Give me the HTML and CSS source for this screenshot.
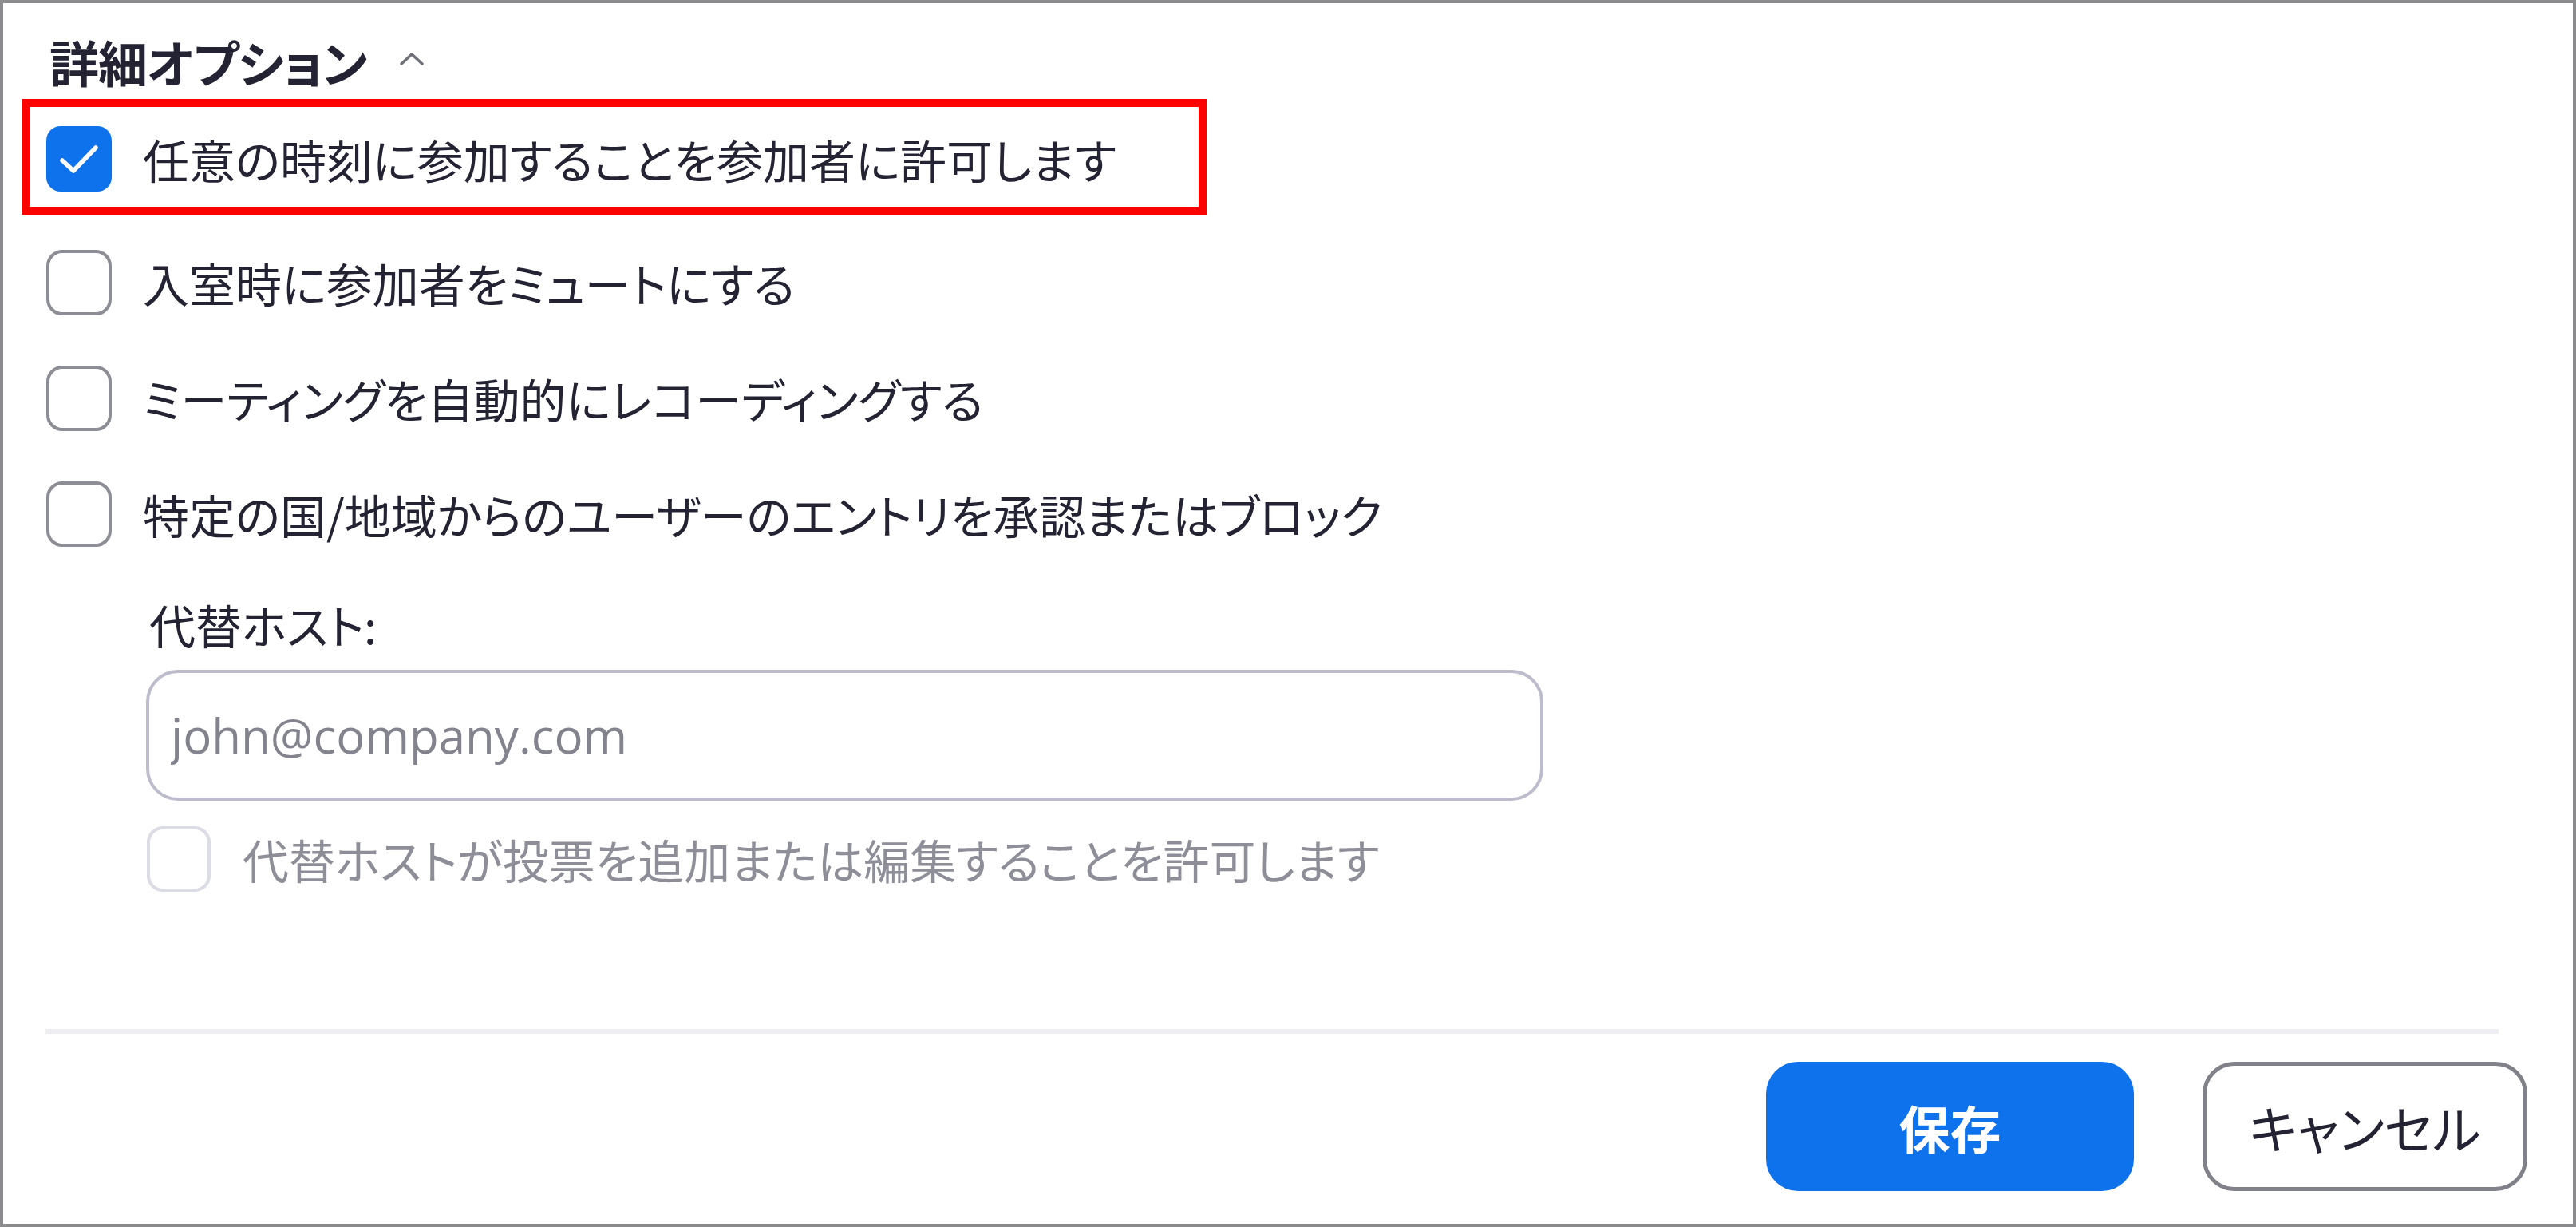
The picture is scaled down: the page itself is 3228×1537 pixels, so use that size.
FILE: index.html
```html
<!DOCTYPE html>
<html lang="ja">
<head>
<meta charset="utf-8">
<title>詳細オプション</title>
<link rel="stylesheet" href="styles.css">
</head>
<body>
<div class="dialog">
  <div class="section-head">
    <span class="title">詳細オプション</span>
    <svg class="caret" viewBox="0 0 32 18" aria-hidden="true"><path d="M3 15 L16 3 L29 15"/></svg>
  </div>

  <div class="opt opt-highlight">
    <span class="cb cb-on"><svg viewBox="0 0 82 82" aria-hidden="true"><path d="M20 43 L34 56 L62 27"/></svg></span>
    <span class="label">任意の時刻に参加することを参加者に許可します</span>
  </div>
  <div class="opt opt-first">
    <span class="cb"></span>
    <span class="label">入室時に参加者をミュートにする</span>
  </div>
  <div class="opt">
    <span class="cb"></span>
    <span class="label">ミーティングを自動的にレコーディングする</span>
  </div>
  <div class="opt">
    <span class="cb"></span>
    <span class="label">特定の国/地域からのユーザーのエントリを承認またはブロック</span>
  </div>

  <div class="alt-host">
    <div class="alt-label">代替ホスト:</div>
    <input class="alt-input" type="text" placeholder="john@company.com">
    <div class="opt opt-disabled">
      <span class="cb cb-disabled"></span>
      <span class="label">代替ホストが投票を追加または編集することを許可します</span>
    </div>
  </div>

  <div class="footer">
    <div class="sep"></div>
    <div class="actions">
      <button class="btn btn-primary" type="button">保存</button>
      <button class="btn btn-secondary" type="button">キャンセル</button>
    </div>
  </div>
</div>
</body>
</html>
```

FILE: styles.css
```css
* { box-sizing: border-box; }

html, body {
  margin: 0;
  padding: 0;
  background: #ffffff;
}

body {
  font-family: "Noto Sans CJK JP", "Noto Sans", sans-serif;
  color: #232333;
  font-feature-settings: "palt";
}

.dialog {
  width: 3228px;
  height: 1537px;
  border: 4px solid #8b8b8d;
  padding: 33px 57px 41px 54px;
  display: flex;
  flex-direction: column;
  background: #ffffff;
}

.section-head {
  display: flex;
  align-items: center;
  height: 80px;
  padding-left: 4px;
}

.title {
  font-size: 62px;
  font-weight: 700;
  line-height: 80px;
  letter-spacing: -1px;
}

.caret {
  width: 32px;
  height: 18px;
  margin-left: 40px;
  margin-top: -6px;
}
.caret path {
  fill: none;
  stroke: #6f6f7a;
  stroke-width: 3.5;
  stroke-linecap: round;
  stroke-linejoin: round;
}

.opt {
  display: flex;
  align-items: center;
  height: 82px;
  margin-top: 63px;
}

.opt-highlight {
  width: 1485px;
  height: 145px;
  margin-top: 7px;
  margin-left: -31px;
  padding: 24px 0 19px 21px;
  border: 10px solid #ff0000;
}

.opt-first {
  margin-top: 44px;
}

.cb {
  flex: none;
  width: 82px;
  height: 82px;
  border: 4px solid #8d8d96;
  border-radius: 20px;
  background: #ffffff;
  display: flex;
  align-items: center;
  justify-content: center;
}

.cb-on {
  border: none;
  background: #0e72ed;
  border-radius: 18px;
}
.cb-on svg {
  width: 82px;
  height: 82px;
}
.cb-on path {
  fill: none;
  stroke: #ffffff;
  stroke-width: 5.5;
  stroke-linecap: round;
  stroke-linejoin: round;
}

.label {
  margin-left: 39px;
  font-size: 58px;
  line-height: 82px;
  white-space: nowrap;
}

.alt-host {
  padding-left: 127px;
  margin-top: 57px;
  display: flex;
  flex-direction: column;
  align-items: flex-start;
}

.alt-label {
  font-size: 58px;
  line-height: 80px;
  padding-left: 2px;
}

.alt-input {
  margin-top: 17px;
  margin-left: -2px;
  width: 1751px;
  height: 164px;
  border: 4px solid #bdbccc;
  border-radius: 40px;
  padding: 0 0 0 27px;
  font-family: "Open Sans", "Noto Sans", sans-serif;
  font-size: 60px;
  color: #232333;
  background: #ffffff;
  outline: none;
}
.alt-input::placeholder {
  color: #83838d;
}

.opt-disabled {
  margin-top: 32px;
  margin-left: -1px;
  height: 82px;
}
.cb-disabled {
  width: 80px;
  height: 82px;
  border-color: #dcdce4;
}
.opt-disabled .label {
  color: #8e8e98;
  margin-left: 40px;
}

.footer {
  margin-top: auto;
  display: flex;
  flex-direction: column;
}

.sep {
  height: 6px;
  background: #ededf2;
  margin: 0 36px 0 -1px;
}

.actions {
  margin-top: 35px;
  display: flex;
  justify-content: flex-end;
  gap: 86px;
}

.btn {
  height: 162px;
  border-radius: 40px;
  font-family: "Noto Sans CJK JP", sans-serif;
  font-feature-settings: "palt";
  font-size: 64px;
  cursor: pointer;
  padding: 0;
}

.btn-primary {
  width: 461px;
  background: #0e72ed;
  border: none;
  color: #ffffff;
  font-weight: 700;
}

.btn-secondary {
  width: 407px;
  background: #ffffff;
  border: 5px solid #818189;
  color: #232333;
  font-weight: 400;
}
```
